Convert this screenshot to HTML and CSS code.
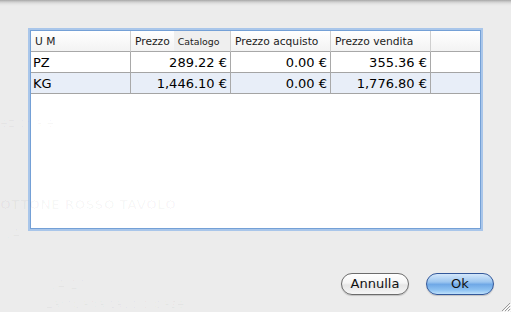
FILE: index.html
```html
<!DOCTYPE html>
<html>
<head>
<meta charset="utf-8">
<link rel="stylesheet" href="styles.css">
</head>
<body>
<div class="sheet">
  <div class="grid-box">
    <div class="grid">
      <div class="hcell">U M</div>
      <div class="hcell hsplit"><span>Prezzo</span><span class="sub">Catalogo</span></div>
      <div class="hcell">Prezzo acquisto</div>
      <div class="hcell">Prezzo vendita</div>
      <div class="hcell"></div>

      <div class="cell">PZ</div>
      <div class="cell num">289.22 €</div>
      <div class="cell num">0.00 €</div>
      <div class="cell num">355.36 €</div>
      <div class="cell"></div>

      <div class="cell alt">KG</div>
      <div class="cell alt num">1,446.10 €</div>
      <div class="cell alt num">0.00 €</div>
      <div class="cell alt num">1,776.80 €</div>
      <div class="cell alt"></div>
    </div>
  </div>
  <div class="actions">
    <button class="btn">Annulla</button>
    <button class="btn btn-default">Ok</button>
  </div>
</div>

<div class="ghost ghost-1">ezionale</div>
<div class="ghost ghost-2">OTTONE ROSSO TAVOLO</div>
<div class="ghost ghost-3">IVA</div>
<div class="ghost ghost-4">IVA 20%</div>
<div class="ghost ghost-5">Lampada tavolo base</div>

<svg class="grip" width="12" height="12" viewBox="0 0 12 12">
  <path d="M11 3 L3 11 M11 6 L6 11 M11 9 L9 11" stroke="#9a9a9a" stroke-width="1"/>
  <path d="M12 4 L4 12 M12 7 L7 12 M12 10 L10 12" stroke="#ffffff" stroke-width="1"/>
</svg>
</body>
</html>
```
FILE: styles.css
```css
html, body {
  margin: 0;
  padding: 0;
}
body {
  width: 511px;
  height: 312px;
  overflow: hidden;
  position: relative;
  background: linear-gradient(#a6a6a6 0px, #cfcfcf 2px, #e4e4e4 4px, #ececec 6px);
  font-family: "DejaVu Sans", "Liberation Sans", sans-serif;
  color: #111;
}
.sheet {
  box-sizing: border-box;
  height: 312px;
  display: flex;
  flex-direction: column;
  padding: 31px 17px 0 31px;
}
.grid-box {
  width: 449px;
  height: 197px;
  background: #fff;
  box-shadow: 0 0 0 1px #74a0d6, 0 0 0 3px #a9c6ea;
}
.grid {
  display: grid;
  grid-template-columns: 100px 100px 100px 100px 49px;
  grid-auto-rows: 21px;
}
.hcell, .cell {
  box-sizing: border-box;
  border-right: 1px solid #a9a9a9;
  border-bottom: 1px solid #a4a4a4;
  display: flex;
  align-items: center;
  white-space: nowrap;
  overflow: hidden;
}
.hcell {
  font-size: 10.7px;
  color: #1c1c1c;
  padding-left: 4px;
  background: linear-gradient(#ffffff, #f3f3f3);
  border-right-color: #cfcfcf;
  border-bottom-color: #a8a8a8;
}
.grid > :nth-child(5n) {
  border-right: none;
}
.hsplit {
  padding-right: 0;
}
.hsplit .sub {
  flex: 1;
  align-self: stretch;
  display: flex;
  align-items: center;
  margin-left: 4px;
  padding-left: 4px;
  font-size: 9.4px;
  background: #efefef;
  color: #1c1c1c;
}
.cell {
  font-size: 13px;
  padding-left: 2px;
  color: #000;
}
.cell.num {
  justify-content: flex-end;
  padding-right: 3px;
}
.cell.alt {
  background: #e8eef8;
}
.actions {
  margin-top: 45px;
  display: flex;
  justify-content: flex-end;
  gap: 17px;
}
.btn {
  box-sizing: border-box;
  width: 68px;
  height: 22px;
  border-radius: 11px;
  border: 1px solid #6c6c6c;
  background: linear-gradient(#ffffff 0%, #f5f5f5 45%, #e6e6e6 55%, #f6f6f6 100%);
  box-shadow: 0 1px 1px rgba(0,0,0,0.18);
  font-family: "DejaVu Sans", "Liberation Sans", sans-serif;
  font-size: 13px;
  color: #111;
  padding: 0;
  line-height: 20px;
}
.btn-default {
  border-color: #33589a;
  background: linear-gradient(#d4e7fa 0%, #9cc6f0 40%, #6fa8e6 52%, #8ec2f2 80%, #bfe1fb 100%);
}
.ghost {
  position: absolute;
  color: rgba(0, 0, 0, 0.028);
  font-size: 13px;
  pointer-events: none;
  white-space: nowrap;
}
.ghost-1 { left: 0; top: 115px; }
.ghost-2 { left: 0; top: 197px; font-size: 13px; font-weight: bold; }
.ghost-3 { left: 0; top: 226px; }
.ghost-4 { left: 45px; top: 277px; }
.ghost-5 { left: 45px; top: 296px; }
.grip {
  position: absolute;
  right: 0;
  bottom: 0;
}
```
